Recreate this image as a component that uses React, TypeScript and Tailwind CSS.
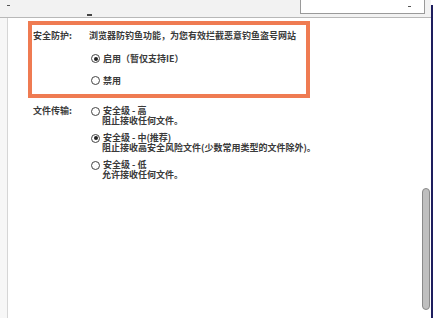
import React from "react";

const font = { fontFamily: '"Noto Sans CJK SC", "Noto Sans", sans-serif' };

function Radio({ checked }: { checked?: boolean }) {
  return (
    <span className="flex h-[9px] w-[9px] shrink-0 items-center justify-center rounded-full border border-[#444] bg-white">
      {checked && <span className="h-[4px] w-[4px] rounded-full bg-[#222]" />}
    </span>
  );
}

function RadioLine({ checked, label }: { checked?: boolean; label: string }) {
  return (
    <div className="flex h-[11px] items-center gap-[3px]">
      <Radio checked={checked} />
      <span className="whitespace-nowrap">{label}</span>
    </div>
  );
}

function FileOption({ checked, title, desc }: { checked?: boolean; title: string; desc: string }) {
  return (
    <div className="flex flex-col">
      <div className="flex h-[10px] items-center gap-[3px]">
        <Radio checked={checked} />
        <span className="whitespace-nowrap leading-[10px]">{title}</span>
      </div>
      <div className="h-[10px] pl-[11px] leading-[10px] whitespace-nowrap">{desc}</div>
    </div>
  );
}

export default function App() {
  return (
    <div
      className="flex h-[318px] w-[433px] overflow-hidden bg-white text-[9px] font-bold leading-[11px] text-[#3a3a3a]"
      style={font}
    >
      <div className="flex min-w-0 flex-1 flex-col">
        {/* top strip */}
        <div className="flex h-[18px] shrink-0 items-start border-b border-[#b8b8b8] bg-[#f2f2f2]">
          <span className="ml-[7px] mt-[5px] h-[1px] w-[3px] bg-[#555]" />
          <span className="ml-[77px] mt-[14px] h-[2px] w-[5px] bg-[#444]" />
          <div className="ml-auto mr-[6px] flex h-[14px] w-[125px] items-start justify-end border-x border-b border-[#9a9a9a] bg-white">
            <span className="mr-[13px] mt-[6px] h-[1px] w-[3px] bg-[#555]" />
          </div>
        </div>
        {/* body */}
        <div className="flex min-h-0 flex-1">
          <div className="w-[8px] shrink-0 border-r border-[#d6d6d6] bg-[#f7f7f7]" />
          <div className="flex w-[406px] shrink-0 flex-col overflow-hidden pt-[3px]">
            <div className="ml-[20px] w-[282px] border-[4px] border-[#ef7b52] pb-[8px] pl-[1px] pt-[5px]">
              <div className="flex h-[11px]">
                <span className="w-[56px] shrink-0 whitespace-nowrap">安全防护:</span>
                <span className="whitespace-nowrap">浏览器防钓鱼功能，为您有效拦截恶意钓鱼盗号网站</span>
              </div>
              <div className="ml-[58px] mt-[12px] flex flex-col gap-[11px]">
                <RadioLine checked label="启用（暂仅支持IE）" />
                <RadioLine label="禁用" />
              </div>
            </div>
            <div className="ml-[25px] mt-[8px] flex">
              <span className="w-[58px] shrink-0 leading-[10px] whitespace-nowrap">文件传输:</span>
              <div className="flex flex-col gap-[7px] leading-[10px]">
                <FileOption title="安全级 - 高" desc="阻止接收任何文件。" />
                <FileOption checked title="安全级 - 中(推荐)" desc="阻止接收高安全风险文件(少数常用类型的文件除外)。" />
                <FileOption title="安全级 - 低" desc="允许接收任何文件。" />
              </div>
            </div>
          </div>
          <div className="flex w-[17px] shrink-0 flex-col items-end pr-px">
            <div className="mt-[170px] h-[122px] w-[8px] rounded-[4px] border border-[#8a8a8a] bg-[#bfbfbf]" />
          </div>
        </div>
      </div>
      <div className="mt-[5px] w-[2px] shrink-0 bg-[#1e1e5e]" />
    </div>
  );
}
